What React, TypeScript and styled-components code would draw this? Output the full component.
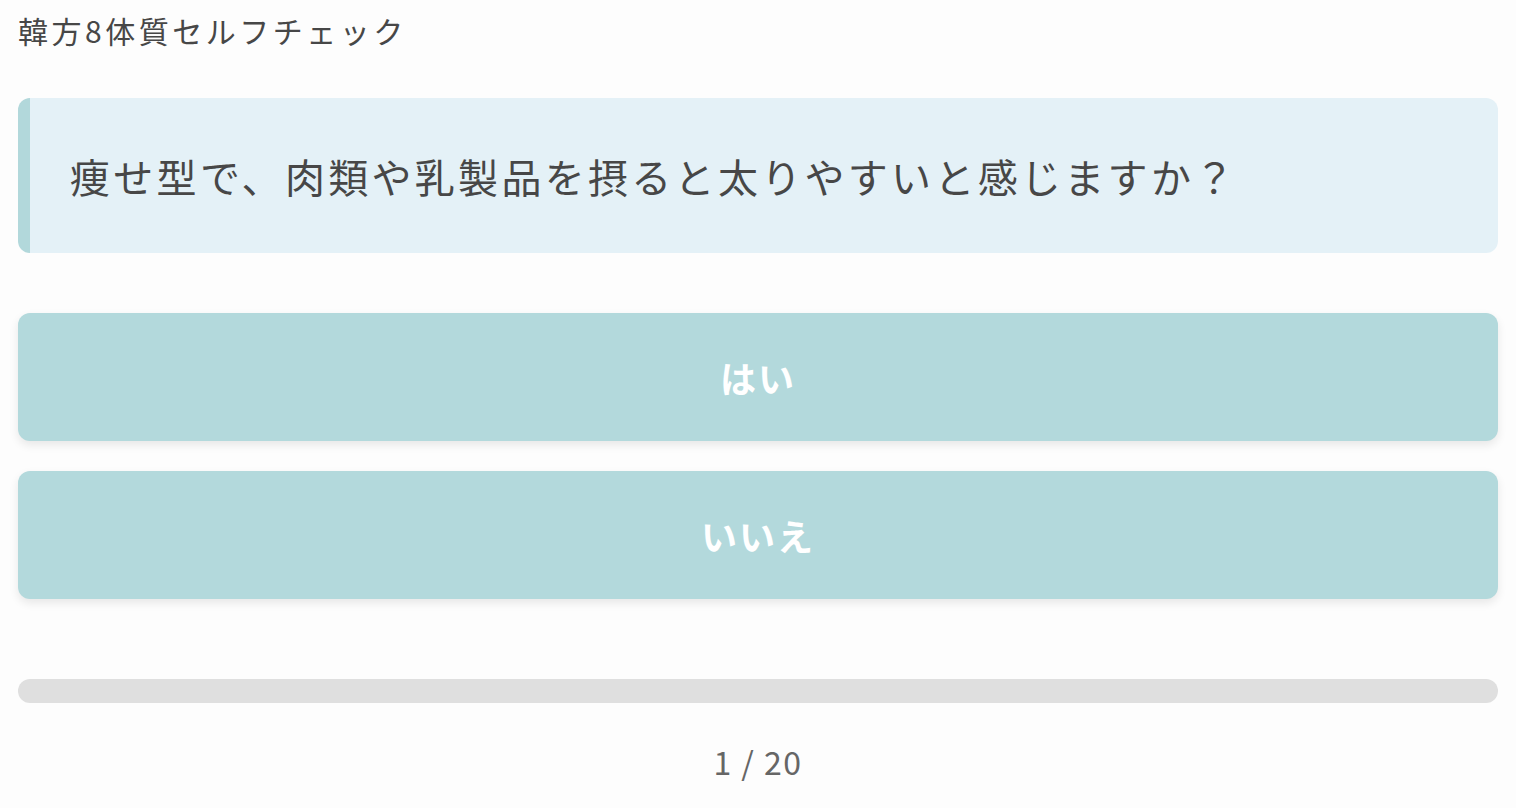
import React from "react";
import styled, { createGlobalStyle } from "styled-components";

const GlobalStyle = createGlobalStyle`
   html, body {
      margin: 0;
      padding: 0;
      background: #fdfdfd;
      font-family: "Noto Sans CJK JP", "Noto Sans", sans-serif;
   }
`;

const Page = styled.div`
   padding: 8px 18px 0;
   display: flex;
   flex-direction: column;
`;

const Title = styled.h1`
   margin: 0;
   font-size: 30px;
   line-height: 45px;
   font-weight: 400;
   letter-spacing: 3.5px;
   color: #474747;
`;

const QuestionCard = styled.div`
   margin-top: 45px;
   height: 155px;
   box-sizing: border-box;
   display: flex;
   align-items: center;
   padding: 0 40px;
   background: #e4f1f7;
   border-left: 12px solid #b2d8db;
   border-radius: 12px;
`;

const QuestionText = styled.p`
   margin: 0;
   font-size: 40px;
   line-height: 60px;
   letter-spacing: 3.3px;
   color: #474747;
`;

const Answers = styled.div`
   margin-top: 60px;
   display: flex;
   flex-direction: column;
   gap: 30px;
`;

const AnswerButton = styled.button`
   height: 128px;
   width: 100%;
   border: none;
   border-radius: 12px;
   background: #b3d9dc;
   box-shadow: 0 4px 10px rgba(0, 0, 0, 0.09);
   color: #ffffff;
   font-family: inherit;
   font-size: 36px;
   font-weight: 700;
   letter-spacing: 2px;
   cursor: pointer;
`;

const ProgressTrack = styled.div`
   margin-top: 80px;
   height: 24px;
   border-radius: 12px;
   background: #dfdfdf;
   overflow: hidden;
`;

const ProgressFill = styled.div`
   height: 100%;
   background: #b3d9dc;
`;

const Counter = styled.div`
   margin-top: 34px;
   text-align: center;
   font-size: 32px;
   line-height: 48px;
   letter-spacing: 1.5px;
   color: #666666;
`;

const current = 1;
const total = 20;

const App: React.FC = () => {
   return (
      <>
         <GlobalStyle />
         <Page>
            <Title>韓方8体質セルフチェック</Title>
            <QuestionCard>
               <QuestionText>
                  痩せ型で、肉類や乳製品を摂ると太りやすいと感じますか？
               </QuestionText>
            </QuestionCard>
            <Answers>
               <AnswerButton>はい</AnswerButton>
               <AnswerButton>いいえ</AnswerButton>
            </Answers>
            <ProgressTrack>
               <ProgressFill style={{ width: `${((current - 1) / total) * 100}%` }} />
            </ProgressTrack>
            <Counter>
               {current} / {total}
            </Counter>
         </Page>
      </>
   );
};

export default App;
